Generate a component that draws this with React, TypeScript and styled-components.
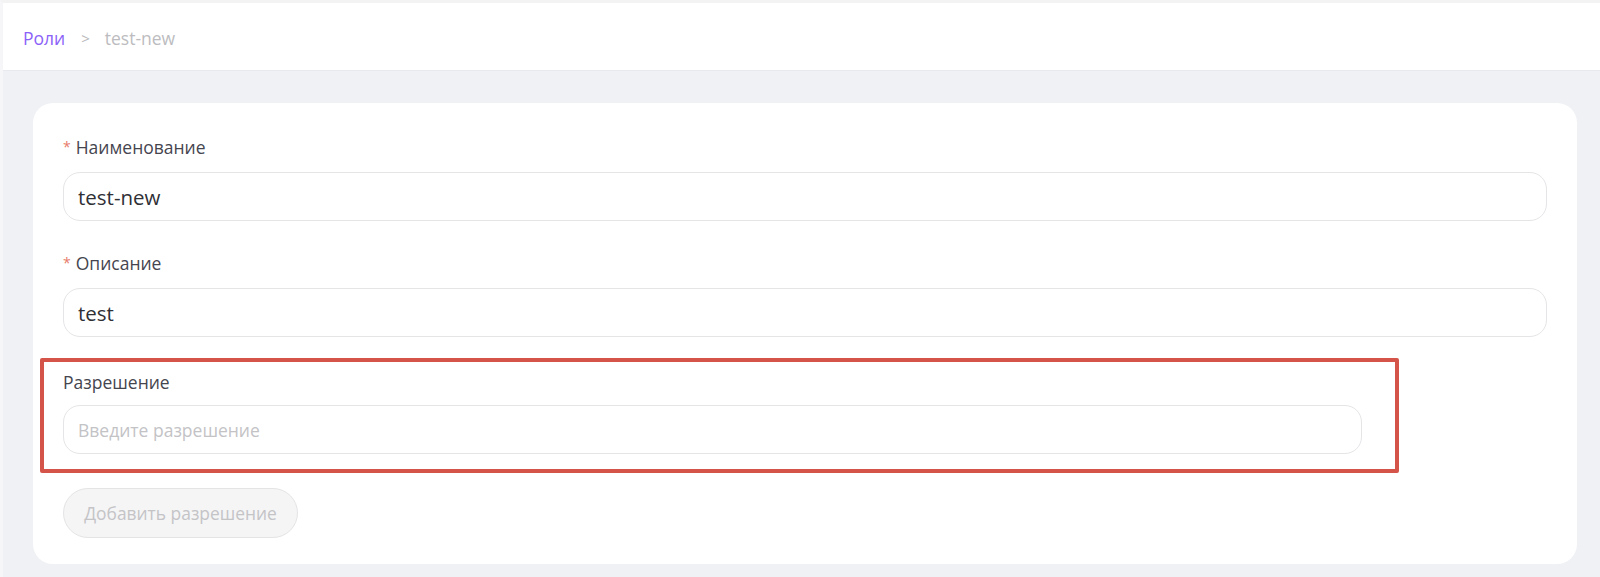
import React from "react";
import styled, { createGlobalStyle } from "styled-components";

const GlobalStyle = createGlobalStyle`
  html, body {
    margin: 0;
    padding: 0;
    background: #f0f1f5;
    font-family: "Open Sans", "Noto Sans", sans-serif;
  }
  * { box-sizing: border-box; }
`;

const Page = styled.div`
  min-height: 577px;
  border-top: 3px solid #f3f3f4;
  border-left: 3px solid #f6f6f8;
  background: #f0f1f5;
`;

const Header = styled.header`
  height: 68px;
  background: #ffffff;
  border-bottom: 1px solid #e8e9ee;
  display: flex;
  align-items: center;
  padding: 2px 0 0 20px;
  font-size: 17.5px;
`;

const Crumb = styled.span<{ $active?: boolean }>`
  color: ${(p) => (p.$active ? "#8b62f8" : "#bcbcc0")};
`;

const Sep = styled.span`
  color: #b9b9bd;
  margin: 0 15px 0 16px;
  font-size: 15px;
`;

const Main = styled.main`
  padding: 32px 23px 13px 30px;
`;

const Card = styled.section`
  background: #ffffff;
  border-radius: 20px;
  padding: 33px 30px 26px 30px;
  display: flex;
  flex-direction: column;
  align-items: stretch;
`;

const Field = styled.div<{ $mt?: number; $gap?: number }>`
  display: flex;
  flex-direction: column;
  gap: ${(p) => p.$gap ?? 14}px;
  margin-top: ${(p) => p.$mt ?? 0}px;
`;

const Label = styled.label`
  font-size: 17.5px;
  line-height: 22px;
  color: #45454f;
  display: flex;
  align-items: center;
`;

const Star = styled.span`
  color: #e77a6a;
  font-size: 14px;
  margin-right: 5px;
`;

const Input = styled.input<{ $large?: boolean }>`
  height: 49px;
  border: 1px solid #e5e5e8;
  border-radius: 17px;
  padding: 0 14px;
  font-family: inherit;
  font-size: ${(p) => (p.$large ? "20.5px" : "17.5px")};
  color: #2f2f36;
  background: #ffffff;
  outline: none;
  width: 100%;
  &::placeholder {
    color: #c3c3c6;
  }
`;

const Highlight = styled.div`
  margin: 21px 148px 0 -23px;
  border: 4px solid #d4544a;
  border-radius: 2px;
  padding: 9px 33px 15px 19px;
`;

const AddButton = styled.button`
  margin-top: 15px;
  align-self: flex-start;
  height: 50px;
  width: 235px;
  border-radius: 25px;
  border: 1px solid #e4e4e6;
  background: #f5f5f6;
  color: #c4c4c7;
  font-family: inherit;
  font-size: 17.4px;
  cursor: not-allowed;
`;

export default function App() {
  return (
    <>
      <GlobalStyle />
      <Page>
        <Header>
          <Crumb $active>Роли</Crumb>
          <Sep>&gt;</Sep>
          <Crumb>test-new</Crumb>
        </Header>
        <Main>
          <Card>
            <Field>
              <Label>
                <Star>*</Star>Наименование
              </Label>
              <Input $large defaultValue="test-new" />
            </Field>
            <Field $mt={31}>
              <Label>
                <Star>*</Star>Описание
              </Label>
              <Input $large defaultValue="test" />
            </Field>
            <Highlight>
              <Field $gap={12}>
                <Label>Разрешение</Label>
                <Input placeholder="Введите разрешение" />
              </Field>
            </Highlight>
            <AddButton disabled>Добавить разрешение</AddButton>
          </Card>
        </Main>
      </Page>
    </>
  );
}
